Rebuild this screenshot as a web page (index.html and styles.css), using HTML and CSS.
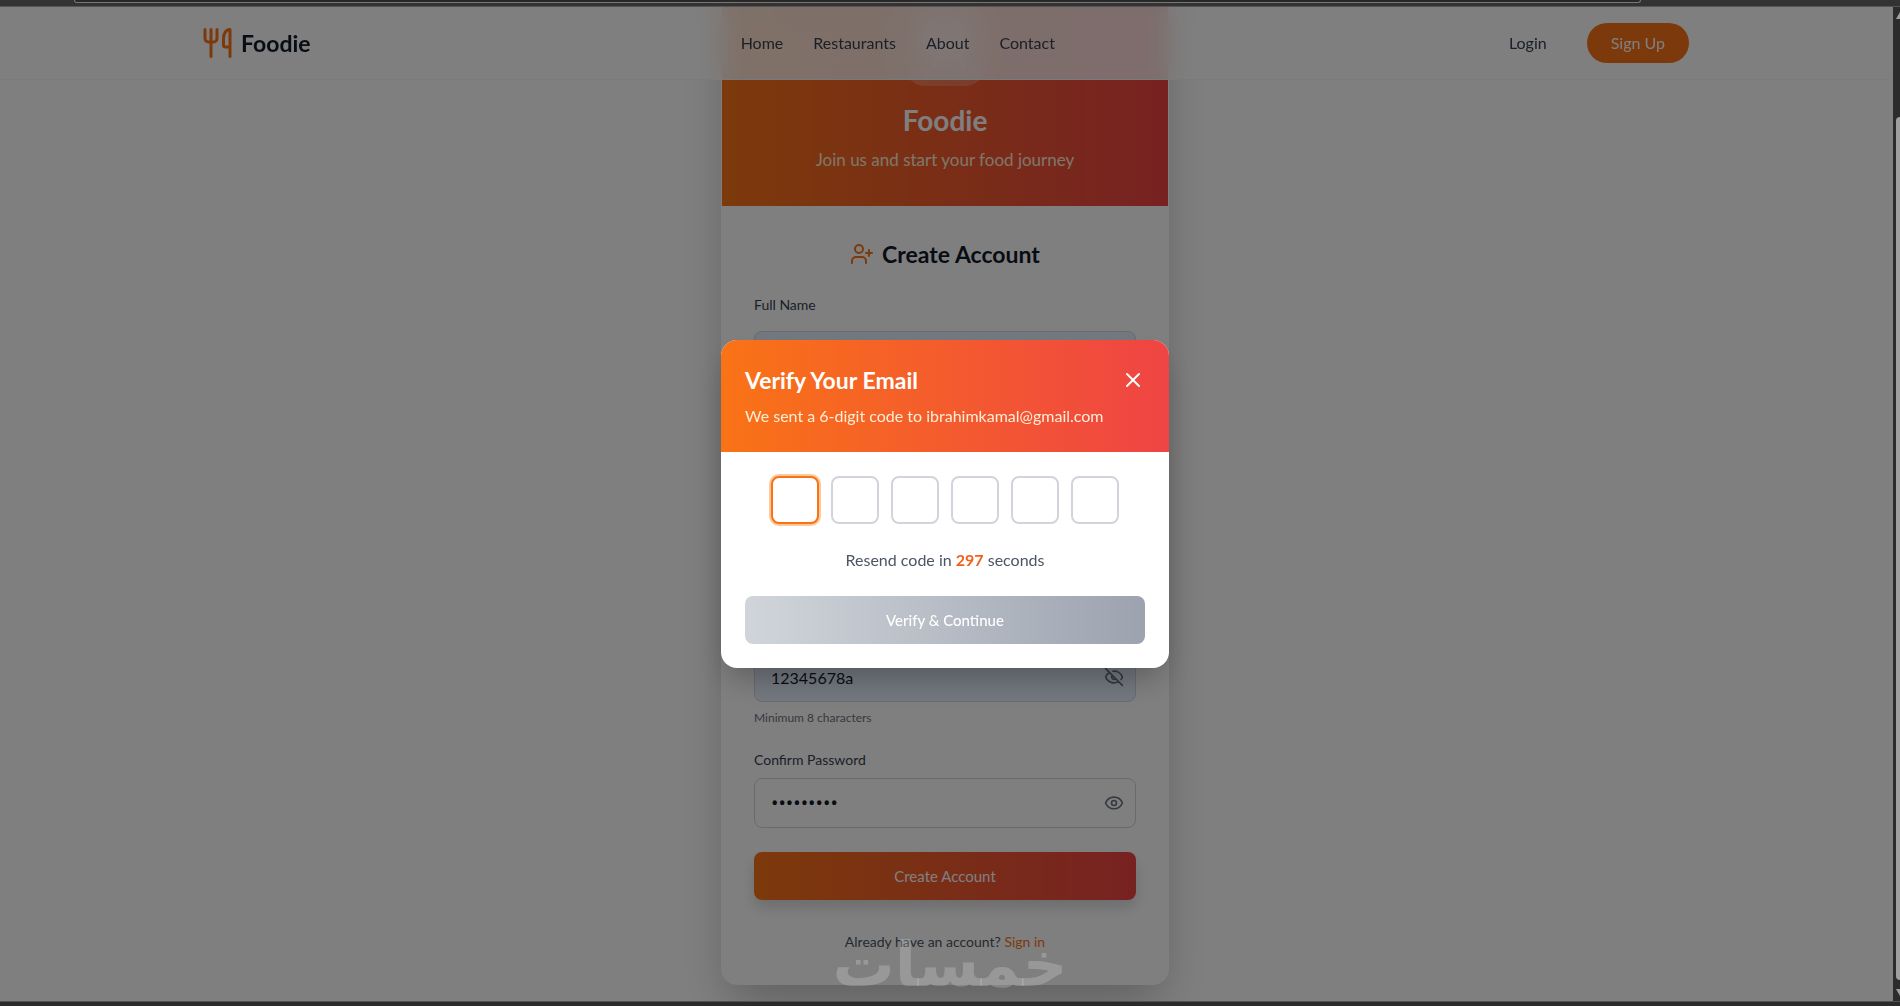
FILE: index.html
```html
<!DOCTYPE html>
<html lang="en">
<head>
  <meta charset="utf-8">
  <meta name="viewport" content="width=device-width, initial-scale=1">
  <title>Foodie - Create Account</title>
  <link rel="stylesheet" href="styles.css">
</head>
<body>
  <div class="browser-top"><div class="address-bar"></div></div>

  <div class="viewport">
    <div class="page">
      <header class="site-header">
        <div class="site-header-inner">
          <a class="brand" href="#">
            <svg class="brand-icon" viewBox="0 0 32 32" aria-hidden="true"><path d="M4 2.500v9a3.500 3.500 0 0 0 3.500 3.500h5a3.500 3.500 0 0 0 3.500-3.500v-9M10 2.500v27M29 29.500v-27c-4 0-6.500 4-6.500 9v6.500a2 2 0 0 0 2 2H29"/></svg>
            <span>Foodie</span>
          </a>
          <nav class="main-nav">
            <a href="#">Home</a>
            <a href="#">Restaurants</a>
            <a href="#">About</a>
            <a href="#">Contact</a>
          </nav>
          <div class="account-links">
            <a href="#">Login</a>
            <a class="signup-link" href="#">Sign Up</a>
          </div>
        </div>
      </header>

      <main class="content">
        <section class="card">
          <div class="card-hero">
            <div class="hero-badge">
              <svg viewBox="0 0 24 24" aria-hidden="true"><path d="M3 2v7a2 2 0 0 0 2 2h4a2 2 0 0 0 2-2V2M7 2v20M21 15V2a5 5 0 0 0-5 5v6a2 2 0 0 0 2 2h3v7"/></svg>
            </div>
            <h1>Foodie</h1>
            <p>Join us and start your food journey</p>
          </div>
          <form class="card-body">
            <h2>
              <svg viewBox="0 0 24 24" aria-hidden="true"><path d="M16 21v-2a4 4 0 0 0-4-4H6a4 4 0 0 0-4 4v2"/><circle cx="9" cy="7" r="4"/><path d="M19 8v6M22 11h-6"/></svg>
              Create Account
            </h2>
            <div class="field">
              <label for="name">Full Name</label>
              <input class="filled" id="name" type="text">
            </div>
            <div class="field">
              <label for="email">Email</label>
              <input id="email" type="email">
            </div>
            <div class="field">
              <label for="phone">Phone</label>
              <input id="phone" type="tel">
            </div>
            <div class="field">
              <label for="password">Password</label>
              <div class="password-box">
                <input class="filled" id="password" type="text" value="12345678a">
                <button class="eye" type="button" aria-label="Hide password">
                  <svg viewBox="0 0 24 24" aria-hidden="true"><path d="M10.700 5.100a10.700 10.700 0 0 1 11.200 6.600 1 1 0 0 1 0 .7 10.700 10.700 0 0 1-1.400 2.500M14.100 14.200a3 3 0 0 1-4.200-4.200M17.500 17.500a10.700 10.700 0 0 1-15.400-5.200 1 1 0 0 1 0-.7 10.700 10.700 0 0 1 4.400-5.100M2 2l20 20"/></svg>
                </button>
              </div>
              <p class="hint">Minimum 8 characters</p>
            </div>
            <div class="field field-confirm">
              <label for="confirm">Confirm Password</label>
              <div class="password-box">
                <input id="confirm" type="password" value="12345678a">
                <button class="eye" type="button" aria-label="Show password">
                  <svg viewBox="0 0 24 24" aria-hidden="true"><path d="M2.100 12.300a1 1 0 0 1 0-.7 10.700 10.700 0 0 1 19.800 0 1 1 0 0 1 0 .7 10.700 10.700 0 0 1-19.800 0"/><circle cx="12" cy="12" r="3"/></svg>
                </button>
              </div>
            </div>
            <button class="create-button" type="submit">Create Account</button>
            <p class="signin-line">Already have an account? <a href="#">Sign in</a></p>
          </form>
        </section>
      </main>
    </div>

    <div class="scrollbar">
      <svg viewBox="0 0 4 8" aria-hidden="true"><path d="M0 7 4 0V7Z"/></svg>
      <div class="thumb"></div>
      <svg viewBox="0 0 4 8" aria-hidden="true"><path d="M0 1H4V8Z"/></svg>
    </div>

    <div class="overlay">
      <section class="modal" role="dialog" aria-labelledby="verify-title">
        <div class="modal-head">
          <div class="modal-title">
            <h2 id="verify-title">Verify Your Email</h2>
            <button class="close" type="button" aria-label="Close">
              <svg viewBox="0 0 24 24" aria-hidden="true"><path d="M18 6 6 18M6 6l12 12"/></svg>
            </button>
          </div>
          <p>We sent a 6-digit code to ibrahimkamal@gmail.com</p>
        </div>
        <form class="modal-body">
          <div class="code">
            <input class="active" type="text" maxlength="1" aria-label="Digit 1">
            <input type="text" maxlength="1" aria-label="Digit 2">
            <input type="text" maxlength="1" aria-label="Digit 3">
            <input type="text" maxlength="1" aria-label="Digit 4">
            <input type="text" maxlength="1" aria-label="Digit 5">
            <input type="text" maxlength="1" aria-label="Digit 6">
          </div>
          <p class="resend">Resend code in <strong>297</strong> seconds</p>
          <button class="verify-button" type="submit" disabled>Verify &amp; Continue</button>
        </form>
      </section>
    </div>

    <div class="watermark" lang="ar" dir="rtl">خمسات</div>
  </div>

  <div class="browser-bottom"></div>
</body>
</html>
```
FILE: styles.css
```css
* { box-sizing: border-box; margin: 0; }

body {
  display: flex;
  flex-direction: column;
  height: 100vh;
  overflow: hidden;
  background: #333;
  color: #111827;
  font: 16px/24px Lato, "Liberation Sans", sans-serif;
}

a { color: inherit; text-decoration: none; }
button, input { font: inherit; color: inherit; }
button { border: 0; padding: 0; background: none; }
svg { fill: none; stroke: currentColor; stroke-width: 2; stroke-linecap: round; stroke-linejoin: round; }

/* Browser edges */
.browser-top { flex: none; height: 7px; padding: 0 259px 0 74px; border-bottom: 1px solid #555; background: #333; }
.address-bar { height: 3px; border: 1px solid #777; border-top: 0; border-radius: 0 0 8px 8px; background: #282828; }
.browser-bottom { flex: none; height: 5px; border-top: 1px solid #505050; background: #2a2a2c; }

.viewport { position: relative; display: flex; flex: 1; min-height: 0; }
.page { position: relative; display: flex; flex: 1; flex-direction: column; overflow: hidden; background: #fff; }
.scrollbar { position: relative; z-index: 3; display: flex; flex: none; flex-direction: column; gap: 8px; width: 10px; padding: 5px 0 5px 3px; border-left: 3px solid #808080; background: #2c2c2c; }
.scrollbar svg { width: 4px; height: 8px; fill: #9f9f9f; stroke: none; }
.thumb { flex: 1; margin-top: 89px; border-radius: 4px 0 0 4px; background: #9f9f9f; }

/* Site header */
.site-header {
  position: absolute;
  z-index: 1;
  inset: 0 0 auto;
  border-bottom: 1px solid #f3f4f6;
  background: rgba(255, 255, 255, .8);
  backdrop-filter: blur(12px);
}
.site-header-inner {
  display: flex;
  align-items: center;
  justify-content: space-between;
  max-width: 1536px;
  height: 72px;
  margin: 0 auto;
  padding: 0 24px;
  color: #374151;
}
.brand { display: flex; align-items: center; gap: 8px; color: #111827; font-size: 23px; font-weight: 700; line-height: 32px; }
.brand-icon { width: 32px; height: 32px; color: #f97316; stroke-width: 3; }
.main-nav { display: flex; gap: 30px; margin-right: 24px; }
.account-links { display: flex; align-items: center; gap: 40px; }
.signup-link { padding: 8px 24px; border-radius: 20px; background: #f97316; color: #fff; }

/* Registration card */
.content { display: flex; flex: 1; flex-direction: column; align-items: center; justify-content: flex-end; min-height: 0; padding: 0 16px 16px; }
.card {
  flex: none;
  width: 100%;
  max-width: 448px;
  overflow: hidden;
  border: 1px solid #fff;
  border-radius: 16px;
  background: #fff;
  box-shadow: 0 24px 48px -8px rgba(0, 0, 0, .25);
}
.card-hero { display: flex; flex-direction: column; align-items: center; padding: 32px; background: linear-gradient(90deg, #f97316, #ef4444); color: #fff; }
.hero-badge { display: flex; padding: 16px; margin-bottom: 16px; border-radius: 20px; background: rgba(255, 255, 255, .2); }
.hero-badge svg { width: 48px; height: 48px; }
.card-hero h1 { margin-bottom: 8px; font-size: 28px; line-height: 36px; }
.card-hero p { color: #ffedd5; font-size: 17px; line-height: 28px; }
.card-body { display: flex; flex-direction: column; gap: 21px; padding: 32px; }
.card-body h2 { display: flex; align-items: center; justify-content: center; gap: 8px; margin-bottom: 4px; font-size: 23px; font-weight: 700; line-height: 32px; }
.card-body h2 svg { width: 24px; height: 24px; color: #f97316; }

.field { display: flex; flex-direction: column; }
.field label { margin-bottom: 16px; color: #374151; font-size: 14px; line-height: 20px; }
.field input { width: 100%; height: 50px; padding: 0 48px 0 16px; border: 1px solid #d1d5db; border-radius: 8px; outline: 0; background: #fff; color: #111827; }
.field input[type="password"] { font-family: Roboto, sans-serif; font-size: 22px; }
.field .filled { background: #e8f0fe; }
.field .hint { margin-top: 8px; color: #6b7280; font-size: 12px; line-height: 16px; }
.field-confirm { margin: 3px 0; }
.field-confirm label { margin-bottom: 8px; }
.password-box { position: relative; display: flex; }
.eye { position: absolute; inset: 0 12px 0 auto; display: flex; align-items: center; color: #6b7280; }
.eye svg { width: 20px; height: 20px; }

.create-button { height: 48px; border-radius: 8px; background: linear-gradient(90deg, #f97316, #ef4444); box-shadow: 0 8px 14px rgba(0, 0, 0, .14); color: #fff; font-size: 15px; }
.signin-line { margin-top: 11px; color: #4b5563; font-size: 14px; line-height: 20px; text-align: center; }
.signin-line a { color: #f97316; }

/* Verification dialog */
.overlay { position: absolute; z-index: 2; inset: 0 10px 0 0; display: flex; align-items: center; justify-content: center; padding: 16px; background: rgba(0, 0, 0, .5); }
.modal { width: 100%; max-width: 448px; overflow: hidden; border-radius: 16px; background: #fff; box-shadow: 0 16px 32px -8px rgba(0, 0, 0, .3); }
.modal-head { padding: 24px; background: linear-gradient(90deg, #f97316, #ef4444); color: #fff; }
.modal-title { display: flex; align-items: center; justify-content: space-between; margin-bottom: 8px; }
.modal-title h2 { font-size: 23px; line-height: 32px; }
.close { display: flex; }
.close svg { width: 24px; height: 24px; }
.modal-head p { color: #ffedd5; }
.modal-body { display: flex; flex-direction: column; gap: 24px; padding: 24px; }
.code { display: flex; justify-content: center; gap: 12px; }
.code input { width: 48px; height: 48px; border: 2px solid #d1d5db; border-radius: 8px; outline: 0; background: #fff; text-align: center; }
.code .active { border-color: #f97316; box-shadow: 0 0 0 2px #fdc99b; }
.resend { color: #4b5563; text-align: center; }
.resend strong { color: #f2601c; }
.verify-button { height: 48px; border-radius: 8px; background: linear-gradient(90deg, #d1d5db, #9ca3af); color: #fff; font-size: 15px; font-weight: 500; }

.watermark {
  position: absolute;
  z-index: 4;
  inset: auto 0 0;
  color: rgba(255, 255, 255, .2);
  font: bold 62px/72px "DejaVu Sans", sans-serif;
  text-align: center;
  pointer-events: none;
}
```
